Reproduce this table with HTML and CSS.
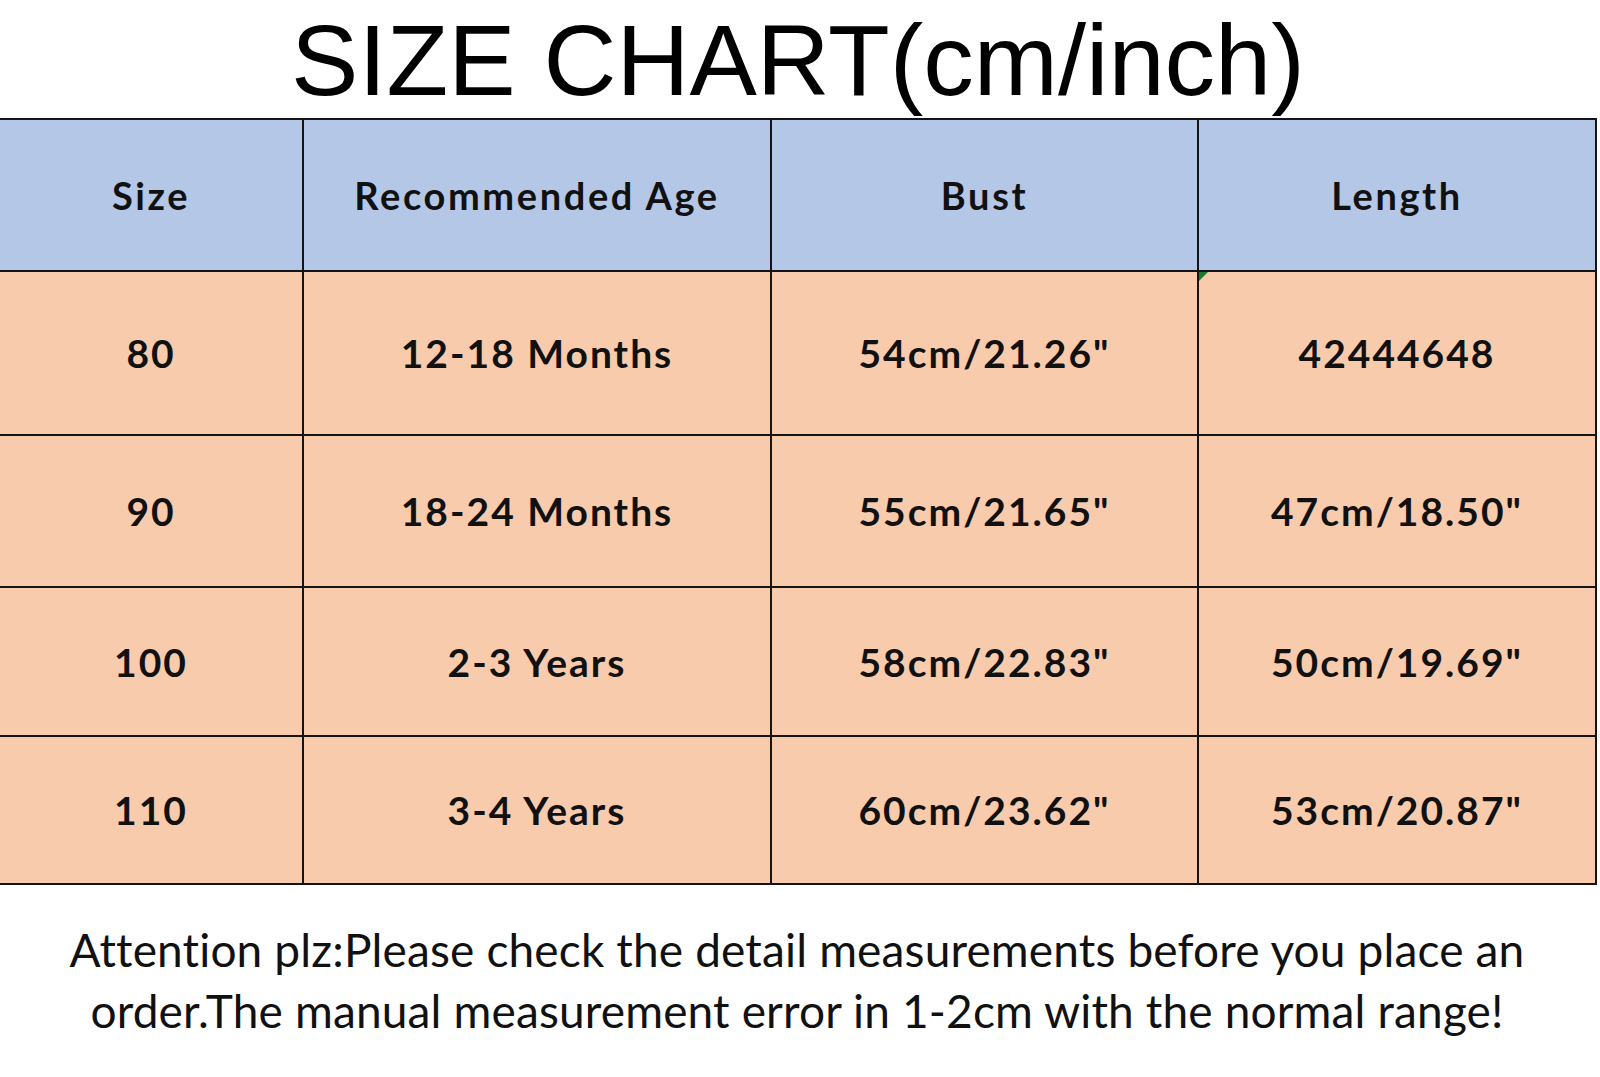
FILE: index.html
```html
<!DOCTYPE html>
<html lang="en">
<head>
<meta charset="utf-8">
<title>Size Chart</title>
<link rel="stylesheet" href="styles.css">
</head>
<body>
<div class="page">
  <h1 class="title">SIZE CHART(cm/inch)</h1>
  <div class="chart">
    <div class="cell head">Size</div>
    <div class="cell head">Recommended Age</div>
    <div class="cell head">Bust</div>
    <div class="cell head">Length</div>

    <div class="cell r1">80</div>
    <div class="cell r1">12-18 Months</div>
    <div class="cell r1">54cm/21.26"</div>
    <div class="cell r1 flagged">42444648<span class="flag"></span></div>

    <div class="cell r2">90</div>
    <div class="cell r2">18-24 Months</div>
    <div class="cell r2">55cm/21.65"</div>
    <div class="cell r2">47cm/18.50"</div>

    <div class="cell r3">100</div>
    <div class="cell r3">2-3 Years</div>
    <div class="cell r3">58cm/22.83"</div>
    <div class="cell r3">50cm/19.69"</div>

    <div class="cell r4">110</div>
    <div class="cell r4">3-4 Years</div>
    <div class="cell r4">60cm/23.62"</div>
    <div class="cell r4">53cm/20.87"</div>
  </div>
  <div class="note">
    <span class="line">Attention plz:Please check the detail measurements before you place an</span>
    <span class="line">order.The manual measurement error in 1-2cm with the normal range!</span>
  </div>
</div>
</body>
</html>
```

FILE: styles.css
```css
html, body {
  margin: 0;
  padding: 0;
  background: #ffffff;
}

.page {
  width: 1600px;
  height: 1077px;
  overflow: hidden;
  position: relative;
}

.title {
  margin: 0;
  height: 118px;
  box-sizing: border-box;
  padding: 10px 4px 0 0;
  font-family: "Liberation Sans", Arial, sans-serif;
  font-weight: 400;
  font-size: 101px;
  line-height: 101px;
  text-align: center;
  color: #000;
  white-space: nowrap;
  position: relative;
  z-index: 1;
}

.chart {
  width: 1597px;
  box-sizing: border-box;
  display: grid;
  grid-template-columns: 302px 466px 425px 396px;
  grid-template-rows: 150px 162px 150px 147px 146px;
  column-gap: 2px;
  row-gap: 2px;
  padding: 2px 2px 2px 0;
  background: #141414;
  font-family: Lato, "Open Sans", sans-serif;
  font-weight: 700;
  color: #111;
}

.cell {
  display: flex;
  align-items: center;
  justify-content: center;
  white-space: nowrap;
  position: relative;
}

.head {
  background: #b4c7e7;
  font-size: 38px;
  letter-spacing: 2.6px;
}

.r1, .r2, .r3, .r4 {
  background: #f8cbad;
  font-size: 39px;
  letter-spacing: 2px;
}

.flag {
  position: absolute;
  left: 0;
  top: 0;
  width: 0;
  height: 0;
  border-top: 9px solid #1a7a2c;
  border-right: 9px solid transparent;
}

.note {
  padding-top: 34px;
  font-family: Lato, "Open Sans", sans-serif;
  font-weight: 400;
  font-size: 46px;
  line-height: 61px;
  letter-spacing: 0.15px;
  color: #111;
  text-align: center;
  padding-right: 6px;
}

.line {
  display: block;
  white-space: nowrap;
}
```
